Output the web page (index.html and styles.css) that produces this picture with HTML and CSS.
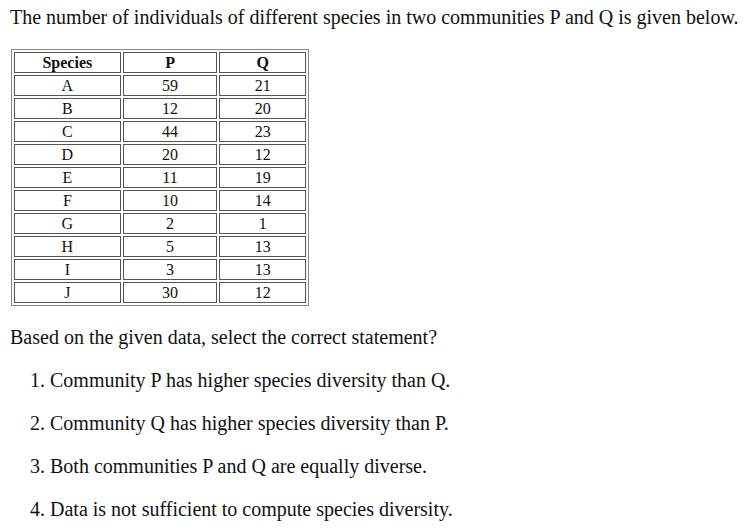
FILE: index.html
```html
<!DOCTYPE html>
<html>
<head>
<meta charset="utf-8">
<link rel="stylesheet" href="styles.css">
</head>
<body>
<p class="intro">The number of individuals of different species in two communities P and Q is given below.</p>
<table class="data">
<tr><th class="c1">Species</th><th class="c2">P</th><th class="c3">Q</th></tr>
<tr><td>A</td><td>59</td><td>21</td></tr>
<tr><td>B</td><td>12</td><td>20</td></tr>
<tr><td>C</td><td>44</td><td>23</td></tr>
<tr><td>D</td><td>20</td><td>12</td></tr>
<tr><td>E</td><td>11</td><td>19</td></tr>
<tr><td>F</td><td>10</td><td>14</td></tr>
<tr><td>G</td><td>2</td><td>1</td></tr>
<tr><td>H</td><td>5</td><td>13</td></tr>
<tr><td>I</td><td>3</td><td>13</td></tr>
<tr><td>J</td><td>30</td><td>12</td></tr>
</table>
<p class="question">Based on the given data, select the correct statement?</p>
<ol class="options">
<li>Community P has higher species diversity than Q.</li>
<li>Community Q has higher species diversity than P.</li>
<li>Both communities P and Q are equally diverse.</li>
<li>Data is not sufficient to compute species diversity.</li>
</ol>
</body>
</html>
```
FILE: styles.css
```css
html, body {
  margin: 0;
  padding: 0;
  background: #ffffff;
}
body {
  font-family: "Liberation Serif", "Times New Roman", serif;
  color: #111111;
  font-size: 20px;
  padding-left: 10px;
}
.intro {
  margin: 0;
  padding-top: 7px;
  line-height: 20px;
}
.data {
  margin-top: 22px;
  margin-left: 1px;
  border: 1px solid #8a8a8a;
  border-spacing: 2px;
  font-size: 16px;
  width: 298px;
}
.data th, .data td {
  border: 1px solid #555555;
  text-align: center;
  padding: 0;
  height: 19px;
  line-height: 19px;
}
.c1 { width: 104px; }
.c2 { width: 92px; }
.c3 { width: 84px; }
.question {
  margin: 21px 0 0 0;
  line-height: 20px;
}
.options {
  margin: 23px 0 0 0;
  padding-left: 40px;
}
.options li {
  line-height: 20px;
  margin-bottom: 23px;
}
```
